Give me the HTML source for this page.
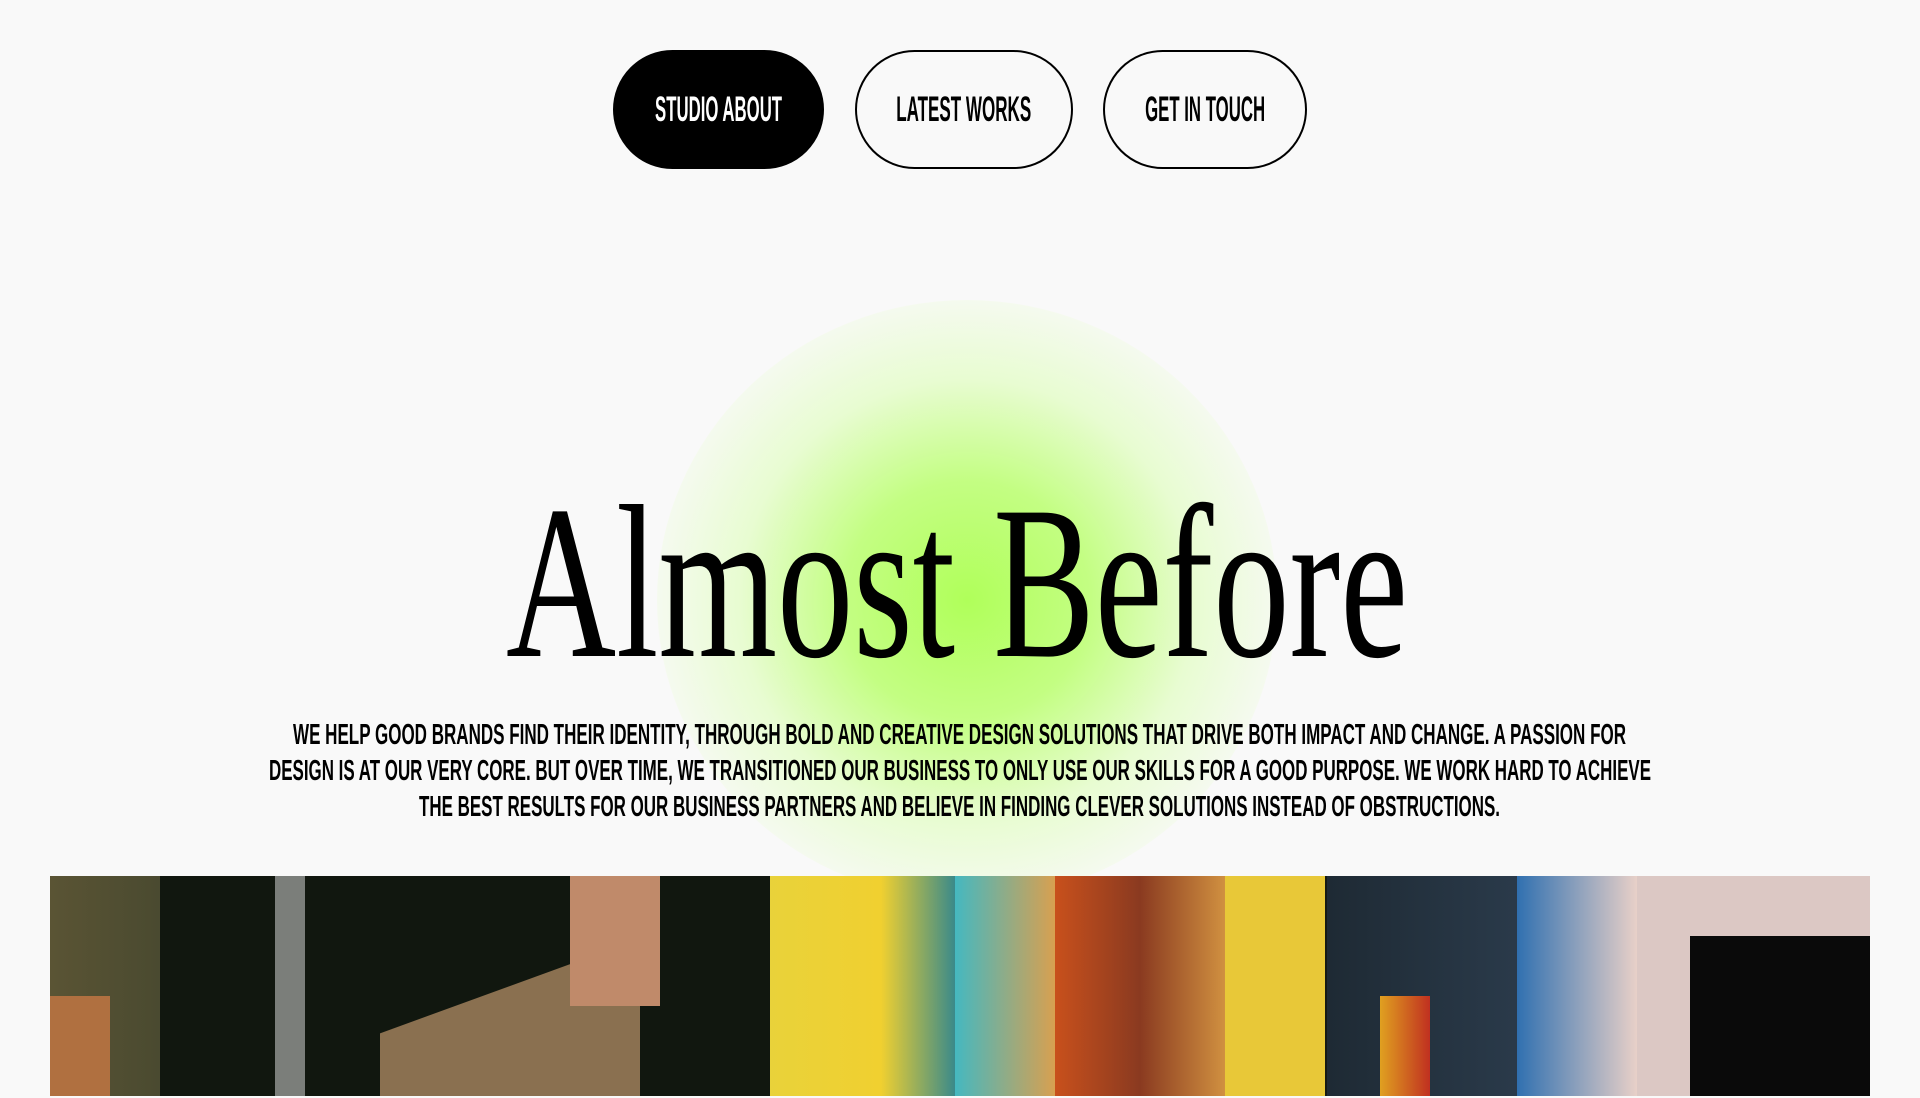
<!DOCTYPE html>
<html><head><meta charset="utf-8">
<style>
html,body{margin:0;padding:0;width:1920px;height:1098px;overflow:hidden;}
body{background:#f9f9f9;position:relative;font-family:"Liberation Sans Narrow","Liberation Sans",sans-serif;}
.btn{position:absolute;top:50px;height:119px;border-radius:60px;box-sizing:border-box;border:2px solid #000;display:flex;align-items:center;justify-content:center;}
.btn span{display:inline-block;font-weight:bold;font-size:35px;white-space:nowrap;line-height:1;}
.glow{position:absolute;left:657px;top:300px;width:620px;height:600px;border-radius:50%;background:radial-gradient(ellipse at center,rgba(176,255,90,1) 0%,rgba(186,255,110,0.85) 28%,rgba(215,255,170,0.5) 52%,rgba(240,252,225,0.2) 74%,rgba(249,249,249,0) 100%);}
.fit{position:absolute;white-space:nowrap;transform-origin:0 0;}
h1{margin:0;font-family:"Liberation Serif",serif;font-weight:normal;font-size:219px;line-height:219px;top:474px;left:506px;}
.p{font-weight:bold;font-size:29px;line-height:36px;color:#000;}
.img{position:absolute;left:50px;top:876px;width:1820px;height:220px;overflow:hidden;background:#151a12;}
.img div{position:absolute;top:0;bottom:0;}
</style></head><body>
<div class="btn" style="left:613px;width:211px;background:#000;"><span id="b1" style="color:#fff">STUDIO ABOUT</span></div>
<div class="btn" style="left:855px;width:218px;"><span id="b2">LATEST WORKS</span></div>
<div class="btn" style="left:1103px;width:204px;"><span id="b3">GET IN TOUCH</span></div>
<div class="glow"></div>
<h1 class="fit" id="h">Almost Before</h1>
<div class="fit p" id="l1" style="left:293px;top:717px;">WE HELP GOOD BRANDS FIND THEIR IDENTITY, THROUGH BOLD AND CREATIVE DESIGN SOLUTIONS THAT DRIVE BOTH IMPACT AND CHANGE. A PASSION FOR</div>
<div class="fit p" id="l2" style="left:269px;top:753px;">DESIGN IS AT OUR VERY CORE. BUT OVER TIME, WE TRANSITIONED OUR BUSINESS TO ONLY USE OUR SKILLS FOR A GOOD PURPOSE. WE WORK HARD TO ACHIEVE</div>
<div class="fit p" id="l3" style="left:419px;top:789px;">THE BEST RESULTS FOR OUR BUSINESS PARTNERS AND BELIEVE IN FINDING CLEVER SOLUTIONS INSTEAD OF OBSTRUCTIONS.</div>
<div class="img">
<div style="left:0;width:110px;background:linear-gradient(90deg,#5a5434,#4a4a30);"></div>
<div style="left:0;width:60px;top:120px;background:#b07040;"></div>
<div style="left:110px;width:610px;background:#11170f;"></div>
<div style="left:330px;width:260px;top:110px;height:160px;bottom:auto;background:#8a7050;transform:skewY(-20deg);"></div>
<div style="left:520px;width:90px;top:0;height:130px;bottom:auto;background:#c08a6a;"></div>
<div style="left:225px;width:30px;background:rgba(230,230,230,0.5);"></div>
<div style="left:720px;width:185px;background:linear-gradient(90deg,#e9d23a,#f0d030 60%,#3a8a8a);"></div>
<div style="left:905px;width:100px;background:linear-gradient(90deg,#45b8c0,#d8a050);"></div>
<div style="left:1005px;width:170px;background:linear-gradient(90deg,#c8501c,#8a3a20 50%,#d09040);"></div>
<div style="left:1175px;width:100px;background:#e8c838;"></div>
<div style="left:1277px;width:190px;background:linear-gradient(90deg,#1e2a34,#2a3a4a);"></div>
<div style="left:1330px;width:50px;top:120px;background:linear-gradient(90deg,#e0a020,#c03020);"></div>
<div style="left:1467px;width:120px;background:linear-gradient(90deg,#3070b0,#e8d0c8);"></div>
<div style="left:1587px;width:233px;background:#dcc8c4;"></div>
<div style="left:1640px;width:180px;top:60px;background:#0a0a0a;"></div>
</div>
<script>
var t={b1:127,b2:135,b3:120,h:902,l1:1333,l2:1382,l3:1081};
for(var k in t){var e=document.getElementById(k);var w=e.getBoundingClientRect().width;if(w>0){e.style.transform='scaleX('+(t[k]/w)+')';}}
</script>
</body></html>
